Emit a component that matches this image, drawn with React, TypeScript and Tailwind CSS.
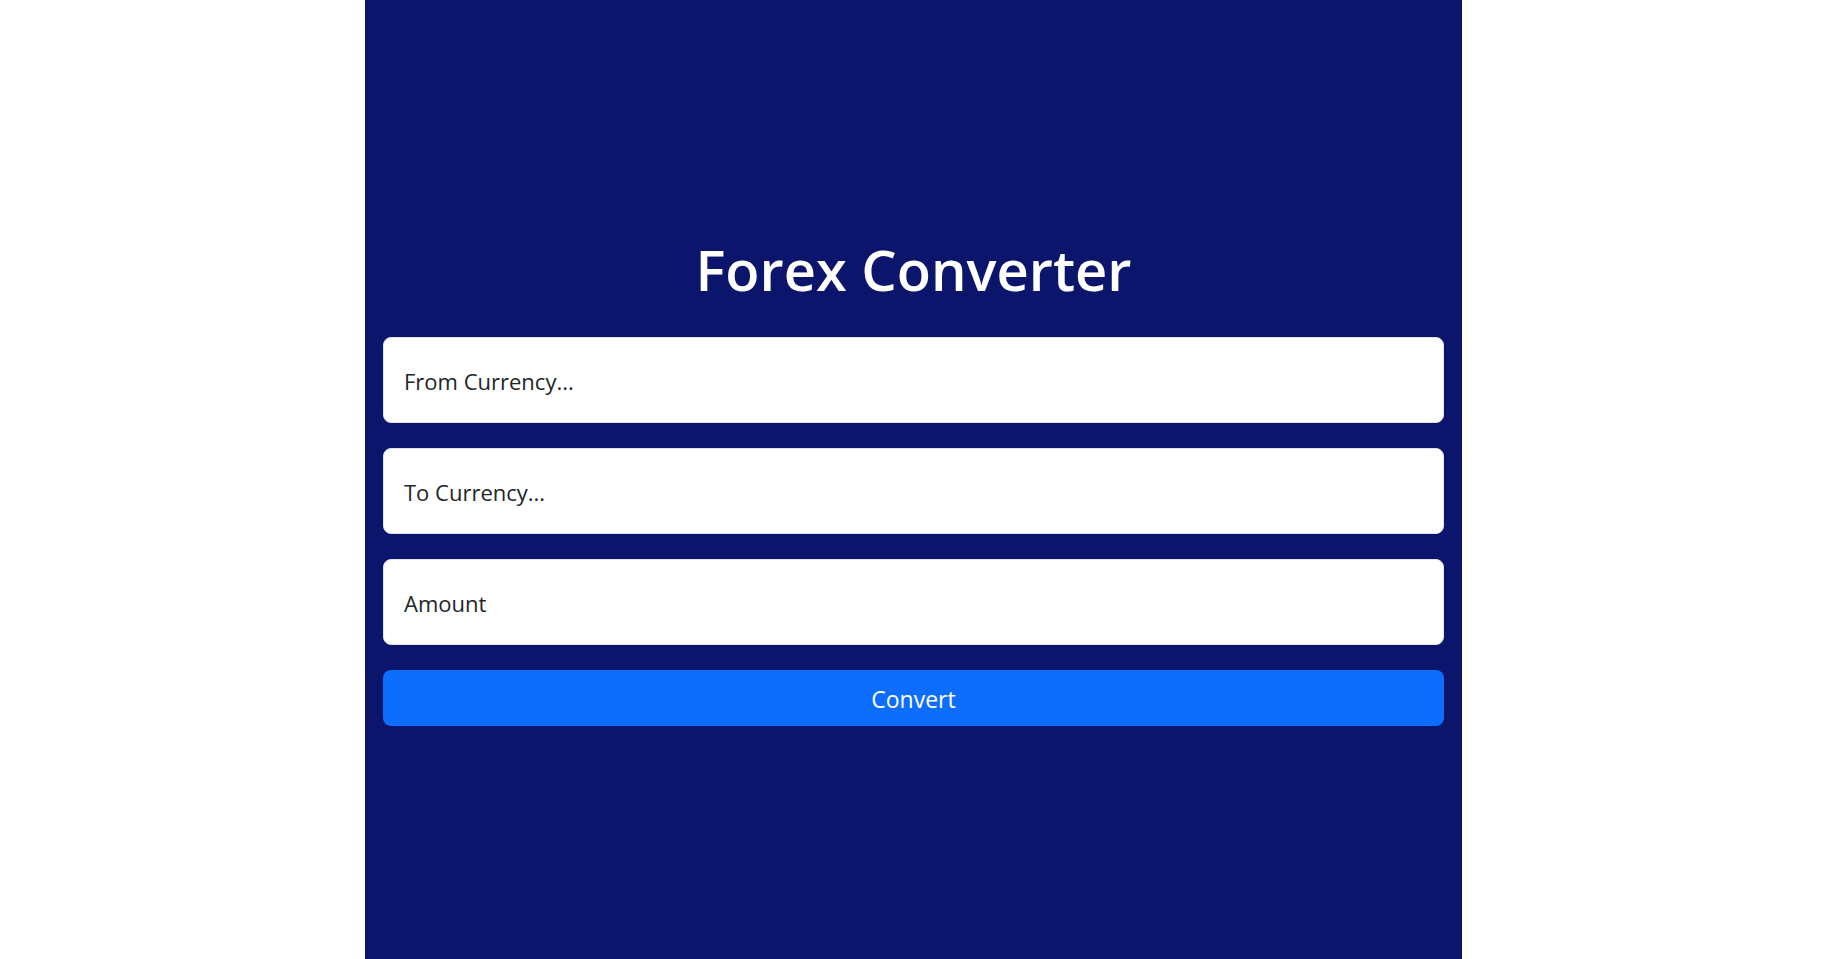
import React from 'react';

const fields = ['From Currency...', 'To Currency...', 'Amount'];

const App: React.FC = () => {
  return (
    <div className="min-h-screen bg-white flex justify-center" style={{ fontFamily: '"Open Sans", "Noto Sans", sans-serif' }}>
      <main className="w-[1097px] h-screen bg-[#0a156b] flex flex-col justify-center px-[18px]">
        <h1 className="text-[56px] leading-[72px] font-semibold text-white text-center mb-8">Forex Converter</h1>
        <form className="flex flex-col gap-[25px]" onSubmit={(e) => e.preventDefault()}>
          {fields.map((label) => (
            <input
              key={label}
              type="text"
              placeholder={label}
              className="h-[86px] w-full bg-white rounded-lg border border-[#dee2e6] px-5 pt-[2px] text-[22px] text-[#212529] placeholder:text-[#212529] outline-none"
            />
          ))}
          <button
            type="submit"
            className="h-[56px] w-full bg-[#0d6efd] rounded-lg text-white text-[23px] pt-[2px]"
          >
            Convert
          </button>
        </form>
      </main>
    </div>
  );
};

export default App;
